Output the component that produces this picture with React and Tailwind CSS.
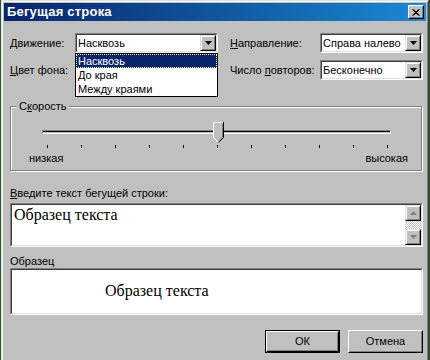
import React from "react";

function Arrow({ color = "#000" }) {
  return (
    <svg width="7" height="4" viewBox="0 0 7 4">
      <polygon points="0,0 7,0 3.5,4" fill={color} />
    </svg>
  );
}

function DropButton() {
  return (
    <div className="w-[16px] h-full border border-[#dfdfdf] border-r-black border-b-black">
      <div className="w-full h-full border border-white border-r-[#808080] border-b-[#808080] bg-[#c0c0c0] flex items-center justify-center">
        <Arrow />
      </div>
    </div>
  );
}

function Sunken({ className = "", children }) {
  return (
    <div className={"border border-[#808080] border-r-white border-b-white " + className}>
      <div className="w-full h-full border border-[#404040] border-r-[#dfdfdf] border-b-[#dfdfdf] flex">
        {children}
      </div>
    </div>
  );
}

function Select({ w, text, children }) {
  return (
    <div className={"relative h-[20px] " + w}>
      <Sunken className="w-full h-full">
        <div className="flex-1 bg-white pl-[1px] leading-[16px] whitespace-nowrap overflow-hidden">{text}</div>
        <DropButton />
      </Sunken>
      {children}
    </div>
  );
}

export default function App() {
  return (
    <div className="w-[430px] h-[360px] overflow-hidden bg-[#2c5a2e] font-['Liberation_Sans',Arial,sans-serif] text-[11px] text-black">
      <div className="ml-[1px] w-[428px] h-[364px] border border-[#dfdfdf] border-r-[#404040] border-b-[#404040]">
        <div className="w-full h-full border border-white border-r-[#808080] border-b-[#808080] bg-[#c0c0c0] p-[1px]">
          {/* title bar */}
          <div className="h-[18px] bg-linear-to-r from-[#0a246a] to-[#1a8ad4] flex items-center justify-between">
            <span className="pl-[3px] text-white font-bold text-[13px] tracking-[0.2px] leading-[18px]">Бегущая строка</span>
            <div className="mr-[2px] w-[16px] h-[14px] border border-white border-r-black border-b-black">
              <div className="w-full h-full border border-[#dfdfdf] border-t-[#c0c0c0] border-l-[#c0c0c0] border-r-[#808080] border-b-[#808080] bg-[#c0c0c0] flex items-center justify-center">
                <svg width="8" height="7" viewBox="0 0 8 7">
                  <path d="M0.5 0.5 L6.5 6.5 M1.5 0.5 L7.5 6.5 M6.5 0.5 L0.5 6.5 M7.5 0.5 L1.5 6.5" stroke="#000" strokeWidth="1" />
                </svg>
              </div>
            </div>
          </div>

          <div className="pl-[6px]">
            {/* row 1 */}
            <div className="mt-[12px] flex items-center">
              <span className="w-[65px]"><u>Д</u>вижение:</span>
              <Select w="w-[143px]" text="Насквозь">
                <div className="absolute z-10 left-0 top-full w-full border border-black bg-white">
                  <div className="h-[14px] bg-[#0a246a] text-white border border-dotted border-[#ffffa0] pl-[1px] leading-[12px]">Насквозь</div>
                  <div className="h-[14px] pl-[2px] leading-[14px]">До края</div>
                  <div className="h-[14px] pl-[2px] leading-[14px]">Между краями</div>
                </div>
              </Select>
              <span className="ml-[12px] w-[90px]"><u>Н</u>аправление:</span>
              <Select w="w-[103px]" text="Справа налево" />
            </div>

            {/* row 2 */}
            <div className="mt-[7px] flex items-center">
              <span className="w-[65px]"><u>Ц</u>вет фона:</span>
              <Select w="w-[143px]" text="" />
              <span className="ml-[12px] w-[90px]">Число <u>п</u>овторов:</span>
              <Select w="w-[103px]" text="Бесконечно" />
            </div>

            {/* speed group */}
            <div className="relative mt-[26px] w-[412px] h-[65px] border border-[#808080] shadow-[1px_1px_0_#fff,inset_1px_1px_0_#fff]">
              <span className="absolute left-[6px] top-[-7px] px-[2px] bg-[#c0c0c0] leading-[13px]">С<u>к</u>орость</span>
              <div className="relative mt-[23px] ml-[31px] w-[349px] h-[4px] border border-[#808080] border-r-white border-b-white">
                <div className="h-[1px] bg-black" />
                <div className="absolute left-[170px] top-[-9px]">
                  <svg width="11" height="21" viewBox="0 0 11 21">
                    <polygon points="0.5,0.5 10.5,0.5 10.5,15.5 5.5,20.5 0.5,15.5" fill="#c0c0c0" />
                    <path d="M0.5 15.5 L0.5 0.5 L10 0.5" stroke="#fff" fill="none" />
                    <path d="M10.5 0 L10.5 15.5 L5.5 20.5" stroke="#000" fill="none" />
                    <path d="M9.5 1.5 L9.5 15 L5.5 19" stroke="#808080" fill="none" />
                    <path d="M0.5 15.5 L5 20" stroke="#fff" fill="none" />
                  </svg>
                </div>
              </div>
              <div className="mt-[11px] ml-[36px] w-[341px] flex justify-between">
                {Array.from({ length: 11 }).map((_, i) => (
                  <div key={i} className="w-[1px] h-[3px] bg-black" />
                ))}
              </div>
              <div className="mt-[4px] flex justify-between pl-[18px] pr-[13px] leading-[13px]">
                <span>низкая</span>
                <span>высокая</span>
              </div>
            </div>

            {/* text input */}
            <div className="mt-[16px] leading-[13px]"><u>В</u>ведите текст бегущей строки:</div>
            <Sunken className="mt-[3px] w-[413px] h-[44px]">
              <div className="flex-1 bg-white pl-[2px] pt-[1px] font-['Liberation_Serif','Times_New_Roman',serif] text-[16px] leading-[18px]">Образец текста</div>
              <div className="w-[16px] flex flex-col">
                <div className="h-[16px] border border-[#dfdfdf] border-r-black border-b-black">
                  <div className="w-full h-full border border-white border-r-[#808080] border-b-[#808080] bg-[#c0c0c0] flex items-center justify-center">
                    <svg width="7" height="4" viewBox="0 0 7 4"><polygon points="0,4 7,4 3.5,0" fill="#808080" /></svg>
                  </div>
                </div>
                <div className="flex-1 bg-[repeating-conic-gradient(#c0c0c0_0_25%,#ffffff_0_50%)] bg-[length:2px_2px]" />
                <div className="h-[16px] border border-[#dfdfdf] border-r-black border-b-black">
                  <div className="w-full h-full border border-white border-r-[#808080] border-b-[#808080] bg-[#c0c0c0] flex items-center justify-center">
                    <Arrow color="#808080" />
                  </div>
                </div>
              </div>
            </Sunken>

            {/* sample */}
            <div className="mt-[8px] leading-[13px]">Образец</div>
            <Sunken className="w-[413px] h-[47px]">
              <div className="flex-1 bg-white pl-[93px] pt-[12px] font-['Liberation_Serif','Times_New_Roman',serif] text-[16px] leading-[18px]">Образец текста</div>
            </Sunken>

            {/* buttons */}
            <div className="mt-[15px] ml-[255px] flex gap-[8px]">
              <div className="w-[75px] h-[23px] border border-black">
                <div className="w-full h-full border border-white border-r-black border-b-black">
                  <div className="w-full h-full border border-transparent border-r-[#808080] border-b-[#808080] flex items-center justify-center">ОК</div>
                </div>
              </div>
              <div className="w-[75px] h-[23px] border border-white border-r-black border-b-black">
                <div className="w-full h-full border border-[#dfdfdf] border-t-[#c0c0c0] border-l-[#c0c0c0] border-r-[#808080] border-b-[#808080] flex items-center justify-center">Отмена</div>
              </div>
            </div>
          </div>
        </div>
      </div>
    </div>
  );
}
